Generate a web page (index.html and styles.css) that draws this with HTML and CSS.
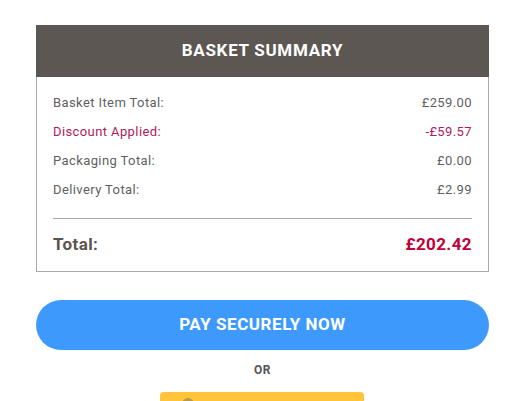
FILE: index.html
```html
<!DOCTYPE html>
<html>
<head>
<meta charset="utf-8">
<link rel="stylesheet" href="styles.css">
</head>
<body>
<div class="wrap">
  <section class="summary">
    <h2 class="summary-title">BASKET SUMMARY</h2>
    <div class="summary-body">
      <div class="row"><span>Basket Item Total:</span><span>£259.00</span></div>
      <div class="row discount"><span>Discount Applied:</span><span>-£59.57</span></div>
      <div class="row"><span>Packaging Total:</span><span>£0.00</span></div>
      <div class="row"><span>Delivery Total:</span><span>£2.99</span></div>
      <div class="row total"><span>Total:</span><span class="total-value">£202.42</span></div>
    </div>
  </section>
  <button class="pay">PAY SECURELY NOW</button>
  <div class="or">OR</div>
  <div class="alt-wrap">
    <button class="alt"><span class="alt-icon"></span></button>
  </div>
</div>
</body>
</html>
```
FILE: styles.css
```css
html, body {
  margin: 0;
  padding: 0;
  background: #fff;
  font-family: Roboto, "Liberation Sans", sans-serif;
}
.wrap {
  width: 453px;
  margin-left: 36px;
  padding-top: 25px;
}
.summary {
  border: 1px solid #a9a9a9;
  border-top: none;
}
.summary-title {
  margin: 0 -1px;
  height: 52px;
  box-sizing: border-box;
  padding-bottom: 2px;
  background: #5d5753;
  color: #fff;
  font-size: 17px;
  font-weight: 700;
  letter-spacing: 0.7px;
  display: flex;
  align-items: center;
  justify-content: center;
}
.summary-body {
  padding: 11px 16px 2px;
}
.row {
  display: flex;
  justify-content: space-between;
  align-items: center;
  height: 29px;
  font-size: 13px;
  letter-spacing: 0.4px;
  color: #5f5f5f;
}
.row.discount {
  color: #b01a5e;
}
.row.total {
  margin-top: 14px;
  border-top: 1px solid #a9a9a9;
  height: 50px;
  font-size: 17px;
  font-weight: 700;
  letter-spacing: 0.4px;
  color: #5a5450;
}
.total-value {
  color: #bf0039;
}
.pay {
  display: block;
  width: 100%;
  height: 50px;
  margin-top: 28px;
  padding: 0 0 3px;
  border: none;
  border-radius: 25px;
  background: #3d9afc;
  color: #fff;
  font-family: inherit;
  font-size: 17px;
  font-weight: 700;
  letter-spacing: 0.55px;
}
.or {
  text-align: center;
  margin-top: 13px;
  font-size: 12px;
  font-weight: 700;
  letter-spacing: 0.5px;
  color: #555;
}
.alt-wrap {
  display: flex;
  justify-content: center;
  margin-top: 15px;
  padding-right: 2px;
}
.alt {
  width: 204px;
  height: 40px;
  border: none;
  border-radius: 4px;
  background: #ffc43a;
  position: relative;
}
.alt-icon {
  position: absolute;
  left: 22px;
  top: 6px;
  width: 12px;
  height: 12px;
  border-radius: 50%;
  background: #b89a4a;
}
```
